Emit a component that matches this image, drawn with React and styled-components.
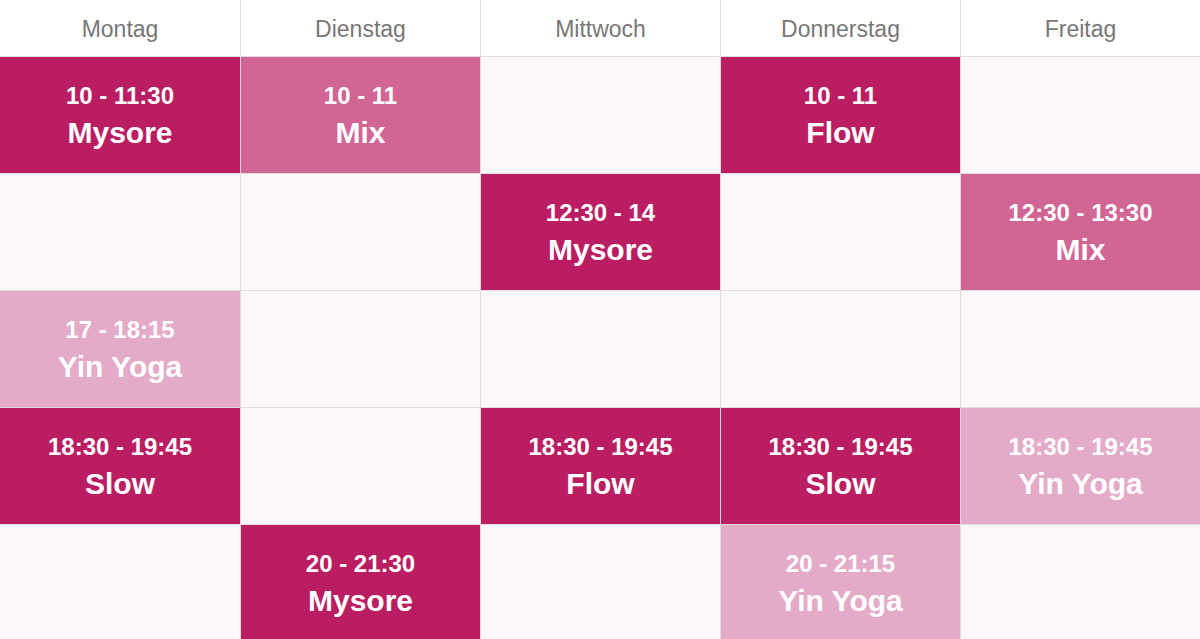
import styled, { createGlobalStyle } from "styled-components";

const GlobalStyle = createGlobalStyle`
  body {
    margin: 0;
    font-family: "Liberation Sans", Arial, Helvetica, sans-serif;
    background: #ffffff;
  }
`;

const Table = styled.div`
  display: grid;
  grid-template-columns: repeat(5, 1fr);
  width: 1200px;
`;

const DayHead = styled.div`
  height: 57px;
  box-sizing: border-box;
  padding-top: 3px;
  display: flex;
  align-items: center;
  justify-content: center;
  font-size: 23px;
  color: #777777;
  background: #ffffff;
  border-bottom: 1px solid #dedcdd;
  border-left: ${({ first }) => (first ? "none" : "1px solid #dedcdd")};
`;

const colors = {
  dark: "#bb1d62",
  mid: "#d16694",
  light: "#e4abc8",
};

const Cell = styled.div`
  height: 117px;
  display: flex;
  flex-direction: column;
  align-items: center;
  justify-content: center;
  color: #ffffff;
  font-weight: bold;
  background: ${({ tone }) => (tone ? colors[tone] : "#fcf8f9")};
  border-left: ${({ first }) => (first ? "none" : "1px solid #dedcdd")};
  border-bottom: 1px solid #dedcdd;
  box-sizing: border-box;
`;

const Time = styled.div`
  font-size: 24px;
  line-height: 36px;
`;

const Name = styled.div`
  font-size: 30px;
  line-height: 38px;
`;

const days = ["Montag", "Dienstag", "Mittwoch", "Donnerstag", "Freitag"];

const rows = [
  [
    { t: "10 - 11:30", n: "Mysore", tone: "dark" },
    { t: "10 - 11", n: "Mix", tone: "mid" },
    null,
    { t: "10 - 11", n: "Flow", tone: "dark" },
    null,
  ],
  [
    null,
    null,
    { t: "12:30 - 14", n: "Mysore", tone: "dark" },
    null,
    { t: "12:30 - 13:30", n: "Mix", tone: "mid" },
  ],
  [{ t: "17 - 18:15", n: "Yin Yoga", tone: "light" }, null, null, null, null],
  [
    { t: "18:30 - 19:45", n: "Slow", tone: "dark" },
    null,
    { t: "18:30 - 19:45", n: "Flow", tone: "dark" },
    { t: "18:30 - 19:45", n: "Slow", tone: "dark" },
    { t: "18:30 - 19:45", n: "Yin Yoga", tone: "light" },
  ],
  [
    null,
    { t: "20 - 21:30", n: "Mysore", tone: "dark" },
    null,
    { t: "20 - 21:15", n: "Yin Yoga", tone: "light" },
    null,
  ],
];

export default function App() {
  return (
    <>
      <GlobalStyle />
      <Table>
        {days.map((d, i) => (
          <DayHead key={d} first={i === 0}>
            {d}
          </DayHead>
        ))}
        {rows.map((row, r) =>
          row.map((c, i) => (
            <Cell key={r + "-" + i} first={i === 0} tone={c && c.tone}>
              {c && (
                <>
                  <Time>{c.t}</Time>
                  <Name>{c.n}</Name>
                </>
              )}
            </Cell>
          ))
        )}
      </Table>
    </>
  );
}
